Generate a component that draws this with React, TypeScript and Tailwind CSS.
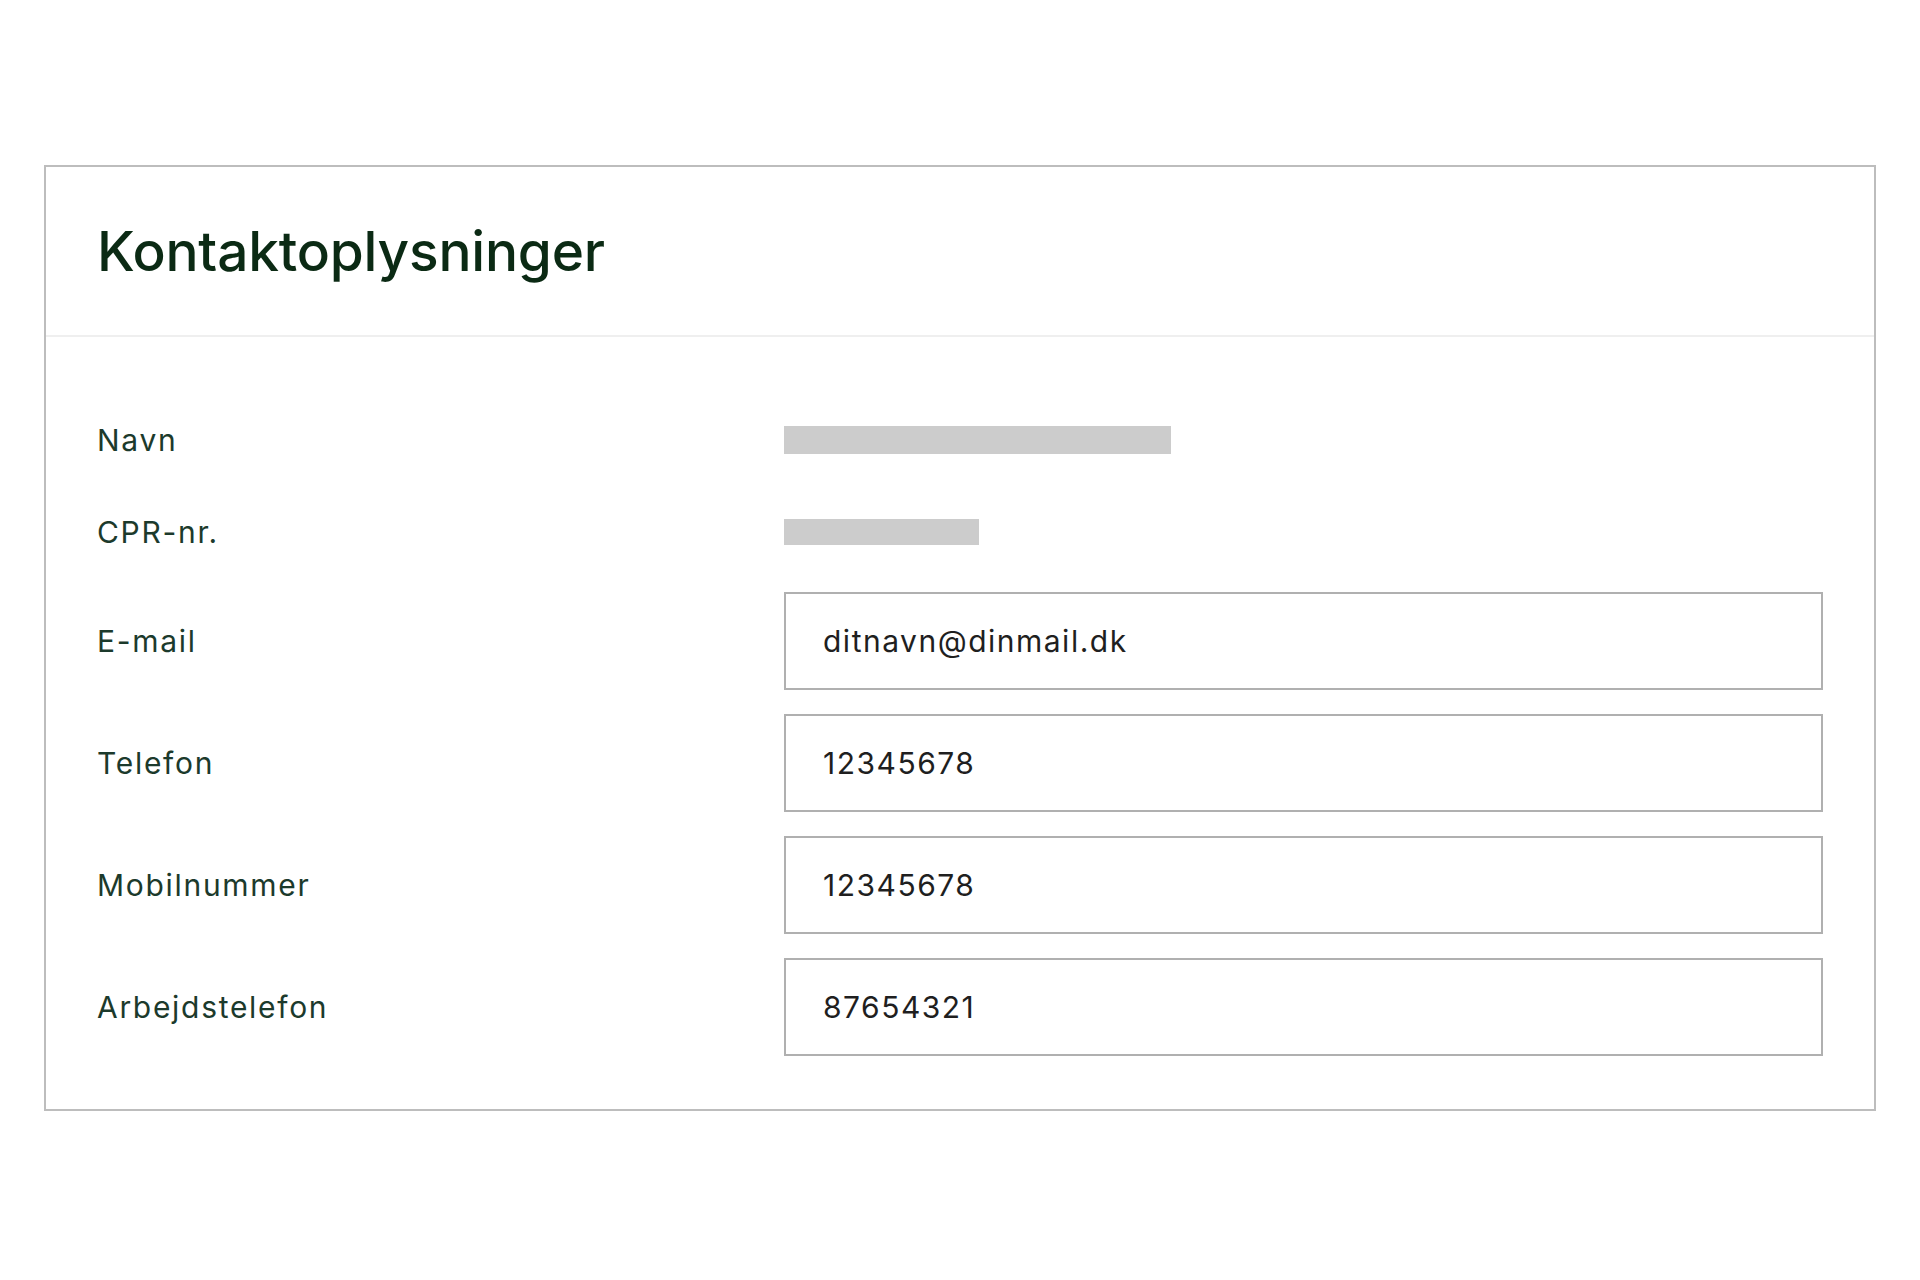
import React from 'react';

const fields = [
  { label: 'E-mail', value: 'ditnavn@dinmail.dk' },
  { label: 'Telefon', value: '12345678' },
  { label: 'Mobilnummer', value: '12345678' },
  { label: 'Arbejdstelefon', value: '87654321' },
];

export default function App() {
  return (
    <div className="min-h-[1280px] bg-white pt-[165px] pl-[44px] pr-[44px] font-['Inter',sans-serif]">
      <div className="border-2 border-[#bdbdbd] bg-white">
        {/* header */}
        <div className="h-[170px] px-[51px] flex items-center border-b-2 border-[#efefef]">
          <h1 className="text-[55px] font-medium tracking-[-0.2px] text-[#0b2a14] leading-none">
            Kontaktoplysninger
          </h1>
        </div>

        {/* body */}
        <div className="px-[51px] pt-[71px] pb-[53px]">
          <div className="grid grid-cols-[687px_1fr] items-center h-[64px]">
            <span className="text-[30px] tracking-[1.7px] text-[#1c3a2c]">Navn</span>
            <div className="h-[28px] w-[387px] bg-[#cccccc]" />
          </div>
          <div className="grid grid-cols-[687px_1fr] items-center h-[64px] mt-[28px]">
            <span className="text-[30px] tracking-[1.7px] text-[#1c3a2c]">CPR-nr.</span>
            <div className="h-[26px] w-[195px] bg-[#cccccc]" />
          </div>

          <div className="flex flex-col gap-[24px] mt-[28px]">
            {fields.map(f => (
              <div key={f.label} className="grid grid-cols-[687px_1fr] items-center">
                <label className="text-[30px] tracking-[1.7px] text-[#1c3a2c]">{f.label}</label>
                <input
                  type="text"
                  defaultValue={f.value}
                  className="h-[98px] w-full border-2 border-[#b0b0b0] pl-[37px] pr-4 text-[30px] tracking-[1.5px] text-[#1f1f1f] outline-none bg-white"
                />
              </div>
            ))}
          </div>
        </div>
      </div>
    </div>
  );
}
